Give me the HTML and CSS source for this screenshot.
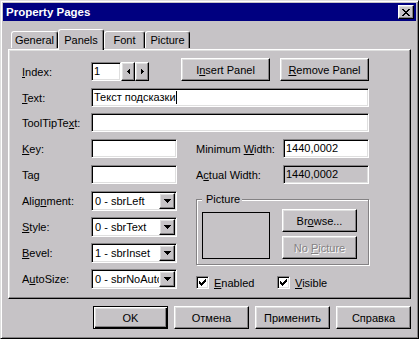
FILE: index.html
```html
<!DOCTYPE html>
<html>
  <head>
    <meta charset="utf-8">
    <title>Property Pages</title>
    <link rel="stylesheet" href="styles.css">
  </head>
  <body>
    <div class="window">
      <div class="titlebar">
        <span class="title">Property Pages</span>
        <button class="btn close-btn">
          <svg width="8" height="7" viewBox="0 0 8 7" shape-rendering="crispEdges"><path d="M0 0h2v1H0zM6 0h2v1H6zM1 1h2v1H1zM5 1h2v1H5zM2 2h4v1H2zM3 3h2v1H3zM2 4h4v1H2zM1 5h2v1H1zM5 5h2v1H5zM0 6h2v1H0zM6 6h2v1H6z"/></svg>
        </button>
      </div>

      <div class="tabs">
        <div class="tab tab-general">General</div>
        <div class="tab tab-active tab-panels">Panels</div>
        <div class="tab tab-font">Font</div>
        <div class="tab tab-picture">Picture</div>
      </div>

      <div class="sheet">
        <div class="row-top">
          <span class="lbl"><span><u>I</u>ndex:</span></span>
          <div class="field field-index">1</div>
          <button class="btn spin-btn">
            <svg width="3" height="5" viewBox="0 0 3 5" shape-rendering="crispEdges"><path d="M2 0h1v5H2zM1 1h1v3H1zM0 2h1v1H0z"/></svg>
          </button>
          <button class="btn spin-btn">
            <svg width="3" height="5" viewBox="0 0 3 5" shape-rendering="crispEdges"><path d="M0 0h1v5H0zM1 1h1v3H1zM2 2h1v1H2z"/></svg>
          </button>
          <div class="panel-btns">
            <button class="btn panel-btn"><span>I<u>n</u>sert Panel</span></button>
            <button class="btn panel-btn"><span><u>R</u>emove Panel</span></button>
          </div>
        </div>

        <div class="row">
          <span class="lbl"><span><u>T</u>ext:</span></span>
          <div class="field field-wide">Текст подсказки<span class="caret"></span></div>
        </div>
        <div class="row row-tight">
          <span class="lbl"><span>ToolTipTe<u>x</u>t:</span></span>
          <div class="field field-wide"></div>
        </div>

        <div class="lower">
          <div class="col-left">
            <span class="lbl"><span><u>K</u>ey:</span></span>
            <div class="field"></div>
            <span class="lbl">Tag</span>
            <div class="field"></div>
            <span class="lbl"><span>Alig<u>n</u>ment:</span></span>
            <div class="combo">
              <span class="combo-text">0 - sbrLeft</span>
              <span class="btn combo-btn"><svg width="7" height="4" viewBox="0 0 7 4" shape-rendering="crispEdges"><path d="M0 0h7v1H0zM1 1h5v1H1zM2 2h3v1H2zM3 3h1v1H3z"/></svg></span>
            </div>
            <span class="lbl"><span><u>S</u>tyle:</span></span>
            <div class="combo">
              <span class="combo-text">0 - sbrText</span>
              <span class="btn combo-btn"><svg width="7" height="4" viewBox="0 0 7 4" shape-rendering="crispEdges"><path d="M0 0h7v1H0zM1 1h5v1H1zM2 2h3v1H2zM3 3h1v1H3z"/></svg></span>
            </div>
            <span class="lbl"><span><u>B</u>evel:</span></span>
            <div class="combo">
              <span class="combo-text">1 - sbrInset</span>
              <span class="btn combo-btn"><svg width="7" height="4" viewBox="0 0 7 4" shape-rendering="crispEdges"><path d="M0 0h7v1H0zM1 1h5v1H1zM2 2h3v1H2zM3 3h1v1H3z"/></svg></span>
            </div>
            <span class="lbl"><span>A<u>u</u>toSize:</span></span>
            <div class="combo">
              <span class="combo-text">0 - sbrNoAutosize</span>
              <span class="btn combo-btn"><svg width="7" height="4" viewBox="0 0 7 4" shape-rendering="crispEdges"><path d="M0 0h7v1H0zM1 1h5v1H1zM2 2h3v1H2zM3 3h1v1H3z"/></svg></span>
            </div>
          </div>

          <div class="col-right">
            <div class="row-right">
              <span class="lbl-right">Minimum <u>W</u>idth:</span>
              <div class="field">1440,0002</div>
            </div>
            <div class="row-right">
              <span class="lbl-right">A<u>c</u>tual Width:</span>
              <div class="field field-disabled">1440,0002</div>
            </div>

            <fieldset class="group">
              <legend>Picture</legend>
              <div class="preview"></div>
              <div class="group-btns">
                <button class="btn group-btn"><span>Br<u>o</u>wse...</span></button>
                <button class="btn group-btn btn-disabled"><span>No <u>P</u>icture</span></button>
              </div>
            </fieldset>

            <div class="checks">
              <span class="check">
                <span class="box"><svg width="7" height="7" viewBox="0 0 7 7" shape-rendering="crispEdges"><path d="M6 0h1v1H6zM5 1h2v1H5zM0 2h1v1H0zM4 2h3v1H4zM0 3h2v1H0zM3 3h3v1H3zM0 4h5v1H0zM1 5h3v1H1zM2 6h1v1H2z"/></svg></span>
                <span><u>E</u>nabled</span>
              </span>
              <span class="check">
                <span class="box"><svg width="7" height="7" viewBox="0 0 7 7" shape-rendering="crispEdges"><path d="M6 0h1v1H6zM5 1h2v1H5zM0 2h1v1H0zM4 2h3v1H4zM0 3h2v1H0zM3 3h3v1H3zM0 4h5v1H0zM1 5h3v1H1zM2 6h1v1H2z"/></svg></span>
                <span><u>V</u>isible</span>
              </span>
            </div>
          </div>
        </div>
      </div>

      <div class="dialog-btns">
        <button class="btn dlg-btn btn-default">OK</button>
        <button class="btn dlg-btn">Отмена</button>
        <button class="btn dlg-btn">Применить</button>
        <button class="btn dlg-btn">Справка</button>
      </div>
    </div>
  </body>
</html>
```

FILE: styles.css
```css
body { margin: 0; background: #c6c3c6; font-family: "Liberation Sans", Arial, sans-serif; font-size: 11px; color: #000; }

.window { width: 419px; height: 339px; box-sizing: border-box; padding: 2px; border: 1px solid; border-color: #dfdfdf #000 #000 #dfdfdf; box-shadow: inset 1px 1px #fff, inset -1px -1px #848284; }

/* title bar */
.titlebar { height: 18px; background: #000080; color: #fff; display: flex; align-items: center; justify-content: space-between; padding: 0 2px 0 3px; }
.title { font-weight: bold; font-size: 11.5px; }

/* 3d buttons */
.btn { font: inherit; color: #000; background: #c6c3c6; padding: 0; box-sizing: border-box; border: 1px solid; border-color: #fff #000 #000 #fff; box-shadow: inset -1px -1px #848284, inset 1px 1px #dfdfdf; display: flex; align-items: center; justify-content: center; }
.btn svg { fill: #000; display: block; }
.close-btn { width: 16px; height: 14px; }
.btn-default { border-color: #000; box-shadow: inset 1px 1px #fff, inset -1px -1px #000, inset -2px -2px #848284, inset 2px 2px #dfdfdf; }
.btn-disabled { color: #848284; text-shadow: 1px 1px #fff; }

/* tabs */
.tabs { display: flex; align-items: flex-end; height: 20px; margin: 8px 0 0 8px; }
.tab { height: 17px; margin-bottom: 1px; box-sizing: border-box; border: 1px solid; border-bottom: none; border-color: #fff #000 #000 #fff; border-radius: 3px 3px 0 0; box-shadow: inset -1px 0 #848284; display: flex; align-items: center; justify-content: center; }
.tab-active { height: 21px; margin: 0 0 -1px 0; position: relative; z-index: 1; background: #c6c3c6; }
.tab-general { width: 47px; }
.tab-panels { width: 46px; }
.tab-font { width: 41px; }
.tab-picture { width: 45px; }

/* property sheet */
.sheet { height: 250px; box-sizing: border-box; margin: 0 5px 0 5px; border: 1px solid; border-color: #fff #000 #000 #fff; box-shadow: inset -1px -1px #848284, inset 1px 1px #dfdfdf; padding: 8px 41px 0 13px; }

.lbl { display: flex; align-items: center; height: 19px; }
.row-top .lbl { width: 69px; }
.row .lbl { width: 69px; flex: none; }

.field { height: 19px; box-sizing: border-box; background: #fff; border: 1px solid; border-color: #848284 #fff #fff #848284; box-shadow: inset 1px 1px #000, inset -1px -1px #dfdfdf; padding: 0 2px; line-height: 17px; white-space: nowrap; overflow: hidden; }
.field-disabled { background: #c6c3c6; }
.field-wide { flex: 1; }
.caret { display: inline-block; width: 1px; height: 13px; background: #000; vertical-align: -3px; }

.row-top { display: flex; align-items: flex-end; height: 23px; }
.field-index { width: 30px; }
.spin-btn { width: 14px; height: 19px; }
.panel-btns { margin-left: auto; display: flex; gap: 10px; }
.panel-btn { width: 89px; height: 23px; }

.row { display: flex; align-items: center; height: 19px; margin-top: 7px; }
.row-tight { margin-top: 6px; }

.lower { display: flex; margin-top: 7px; }
.col-left { display: grid; grid-template-columns: 69px 86px; grid-auto-rows: 19px; row-gap: 7px; }

.combo { height: 20px; box-sizing: border-box; background: #fff; border: 1px solid; border-color: #848284 #fff #fff #848284; box-shadow: inset 1px 1px #000, inset -1px -1px #dfdfdf; display: flex; padding: 1px; }
.combo-text { flex: 1; padding-left: 2px; line-height: 16px; white-space: nowrap; overflow: hidden; }
.combo-btn { width: 16px; height: 16px; flex: none; }

.col-right { margin-left: 19px; width: 173px; display: flex; flex-direction: column; }
.row-right { display: flex; align-items: center; height: 19px; }
.row-right + .row-right { margin-top: 7px; }
.lbl-right { width: 87px; }
.row-right .field { width: 86px; }

.group { margin: 9px 0 0 0; width: 173px; box-sizing: border-box; padding: 3px 11px 5px 5px; border: 1px solid #848284; box-shadow: inset 1px 1px #fff, 1px 1px #fff; display: flex; align-items: flex-start; }
.group legend { padding: 0 2px 0 4px; line-height: 13px; background: #c6c3c6; }
.preview { width: 68px; height: 47px; box-sizing: border-box; margin-top: 3px; border: 1px solid #000; }
.group-btns { margin-left: 12px; display: flex; flex-direction: column; gap: 4px; }
.group-btn { width: 75px; height: 23px; }

.checks { display: flex; margin-top: 11px; }
.check { display: flex; align-items: center; gap: 5px; width: 81px; }
.box { width: 13px; height: 13px; box-sizing: border-box; background: #fff; border: 1px solid; border-color: #848284 #fff #fff #848284; box-shadow: inset 1px 1px #000, inset -1px -1px #dfdfdf; display: flex; align-items: center; justify-content: center; }

/* bottom buttons */
.dialog-btns { display: flex; justify-content: flex-end; gap: 6px; margin-top: 7px; padding-right: 5px; }
.dlg-btn { width: 75px; height: 23px; }
```
